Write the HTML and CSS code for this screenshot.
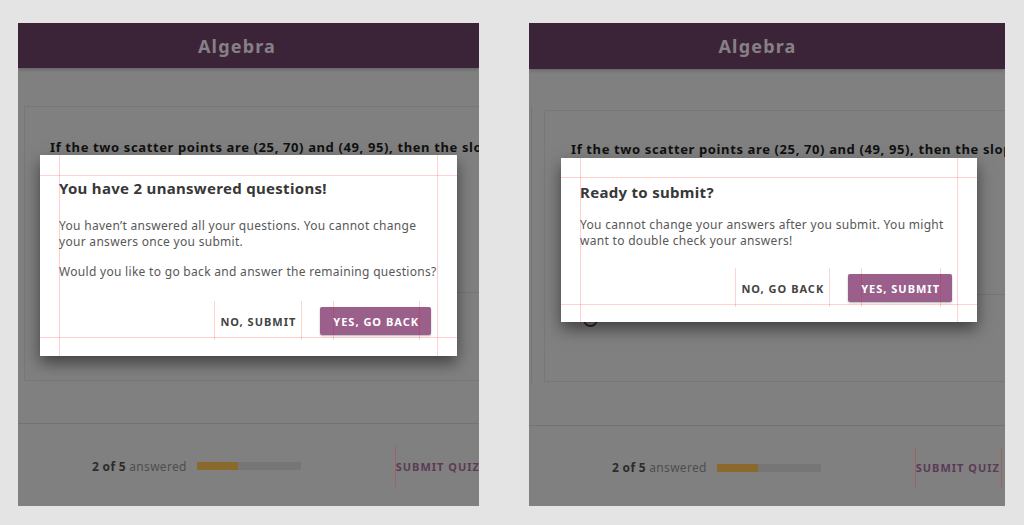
FILE: index.html
```html
<!DOCTYPE html>
<html lang="en">
<head>
<meta charset="utf-8">
<title>Algebra quiz – submit dialogs</title>
<link rel="stylesheet" href="styles.css">
</head>
<body>
<div class="stage">
  <section class="panel panel--a">
    <header class="bar"><h1>Algebra</h1></header>
    <div class="content">
      <div class="card">
        <p class="question">If the two scatter points are (25, 70) and (49, 95), then the slope of the line is</p>
        <div class="option"><span class="radio"></span></div>
      </div>
    </div>
    <footer class="foot">
      <span class="count"><b>2 of 5</b> answered</span>
      <span class="progress"><span class="fill" style="width:40%"></span></span>
      <button class="submit-quiz">SUBMIT QUIZ</button>
    </footer>
    <div class="dialog dialog--a">
      <h2 class="dlg-title">You have 2 unanswered questions!</h2>
      <p class="dlg-text">You haven’t answered all your questions. You cannot change your answers once you submit.</p>
      <p class="dlg-text">Would you like to go back and answer the remaining questions?</p>
      <div class="actions">
        <button class="btn btn-text">NO, SUBMIT</button>
        <button class="btn btn-fill">YES, GO BACK</button>
      </div>
    </div>
  </section>

  <section class="panel panel--b">
    <header class="bar"><h1>Algebra</h1></header>
    <div class="content">
      <div class="edge"></div>
      <div class="card">
        <p class="question">If the two scatter points are (25, 70) and (49, 95), then the slope of the line is</p>
        <div class="option"><span class="radio"></span></div>
      </div>
    </div>
    <footer class="foot">
      <span class="count"><b>2 of 5</b> answered</span>
      <span class="progress"><span class="fill" style="width:40%"></span></span>
      <button class="submit-quiz">SUBMIT QUIZ</button>
    </footer>
    <div class="dialog dialog--b">
      <h2 class="dlg-title">Ready to submit?</h2>
      <p class="dlg-text">You cannot change your answers after you submit. You might want to double check your answers!</p>
      <div class="actions">
        <button class="btn btn-text">NO, GO BACK</button>
        <button class="btn btn-fill">YES, SUBMIT</button>
      </div>
    </div>
  </section>
</div>
</body>
</html>
```

FILE: styles.css
```css
* { box-sizing: border-box; margin: 0; padding: 0; }

html, body { background: #e4e4e4; }

body {
  font-family: "Noto Sans", "Open Sans", sans-serif;
  height: 525px;
  overflow: hidden;
}

.stage {
  display: flex;
  gap: 50px;
  padding: 23px 0 0 18px;
}

.panel {
  position: relative;
  overflow: hidden;
  background: #808080;
  display: flex;
  flex-direction: column;
  height: 483px;
  flex: none;
}
.panel--a { width: 461px; }
.panel--b { width: 476px; }

.bar {
  background: #3c2438;
  display: flex;
  align-items: center;
  justify-content: center;
  box-shadow: 0 2px 3px rgba(0, 0, 0, 0.18);
  position: relative;
  z-index: 1;
  flex: none;
}
.panel--a .bar { height: 45px; padding-right: 23px; }
.panel--b .bar { height: 46px; padding-right: 19px; }
.bar h1 {
  font-size: 18px;
  font-weight: 700;
  letter-spacing: 1.2px;
  color: #878087;
  line-height: 24px;
}

.content {
  display: flex;
  align-items: flex-start;
  flex: none;
}
.panel--a .content { height: 355px; }
.panel--b .content { height: 356px; }

.edge {
  width: 1px;
  height: 276px;
  margin: 38px 0 0 2px;
  background: #757575;
  flex: none;
}

.card {
  border: 1px solid #777777;
  width: 640px;
  flex: none;
}
.panel--a .card { margin: 38px 0 0 6px; height: 275px; padding: 31px 0 0 25px; }
.panel--b .card { margin: 41px 0 0 12px; height: 272px; padding: 29px 0 0 26px; }

.question {
  font-size: 13px;
  font-weight: 700;
  letter-spacing: 0.62px;
  line-height: 18px;
  color: #111111;
  white-space: nowrap;
}

.option {
  margin-top: 136px;
  border-top: 1px solid #757575;
  padding: 17px 0 0 12px;
  display: flex;
  align-items: flex-start;
  height: 52px;
}
.radio {
  width: 15px;
  height: 15px;
  border: 2px solid #3a1f36;
  border-radius: 50%;
  flex: none;
}

.foot {
  border-top: 1px solid #737373;
  display: flex;
  align-items: center;
  flex: none;
}
.panel--a .foot { height: 83px; padding: 2px 0 0 74px; }
.panel--b .foot { height: 81px; padding: 3px 0 0 83px; }

.count {
  font-size: 12px;
  letter-spacing: 0.3px;
  color: #4e4e4e;
  white-space: nowrap;
}
.count b { color: #2c2c2c; font-weight: 700; }

.progress {
  width: 104px;
  height: 8px;
  background: #767676;
  margin-left: 10px;
  display: flex;
  flex: none;
}
.fill { height: 100%; background: #8a6a2c; }

.submit-quiz {
  margin-left: 94px;
  height: 42px;
  background: none;
  border: 0;
  border-left: 1px solid rgba(255, 0, 0, 0.2);
  border-right: 1px solid rgba(255, 0, 0, 0.2);
  padding: 0 1px 0 0;
  font-family: inherit;
  font-size: 11px;
  font-weight: 700;
  letter-spacing: 1px;
  color: #5b3b56;
  white-space: nowrap;
  flex: none;
}

/* dialogs */
.dialog {
  position: absolute;
  z-index: 5;
  background: #ffffff;
  box-shadow: 0 7px 15px rgba(0, 0, 0, 0.5);
}
.dialog--a { left: 22px; top: 132px; width: 417px; padding: 20px 19px 18px; }
.dialog--b { left: 32px; top: 135px; width: 416px; padding: 19px 19px 17px; }

.dialog::before,
.dialog::after {
  content: "";
  position: absolute;
  pointer-events: none;
  z-index: 3;
}
.dialog::before {
  left: 0;
  right: 0;
  border-top: 1px solid rgba(255, 0, 0, 0.18);
  border-bottom: 1px solid rgba(255, 0, 0, 0.18);
}
.dialog--a::before { top: 20px; bottom: 18px; }
.dialog--b::before { top: 19px; bottom: 17px; }
.dialog::after {
  top: 0;
  bottom: 0;
  left: 19px;
  right: 19px;
  border-left: 1px solid rgba(255, 0, 0, 0.18);
  border-right: 1px solid rgba(255, 0, 0, 0.18);
}

.dlg-title {
  font-size: 15px;
  font-weight: 700;
  line-height: 20px;
  letter-spacing: 0.3px;
  color: #383838;
  margin-top: 3px;
}
.dialog--b .dlg-title { margin-top: 5px; }

.dlg-text {
  font-size: 12px;
  line-height: 16px;
  letter-spacing: 0.3px;
  color: #585858;
  margin-top: 20px;
}
.dlg-text + .dlg-text { margin-top: 14px; }
.dialog--b .dlg-text { margin-top: 15px; }

.actions {
  display: flex;
  justify-content: flex-end;
  gap: 18px;
  padding: 0 7px 3px 0;
  margin-top: 27px;
}
.dialog--b .actions { margin-top: 25px; padding-right: 6px; }

.btn {
  position: relative;
  height: 28px;
  border: 0;
  font-family: inherit;
  font-size: 11px;
  font-weight: 700;
  letter-spacing: 1px;
  white-space: nowrap;
}
.btn::after {
  content: "";
  position: absolute;
  top: -6px;
  bottom: -5px;
  border-left: 1px solid rgba(255, 0, 0, 0.18);
  border-right: 1px solid rgba(255, 0, 0, 0.18);
  pointer-events: none;
}
.btn-text {
  background: none;
  color: #444444;
  padding: 0 6px;
}
.btn-text::after { left: 0; right: 0; }
.btn-fill {
  background: #9a5f8b;
  color: #ffffff;
  padding: 0 12px 0 13px;
  border-radius: 2px;
  box-shadow: 0 1px 2px rgba(0, 0, 0, 0.3);
}
.btn-fill::after { left: 13px; right: 11px; }
```
